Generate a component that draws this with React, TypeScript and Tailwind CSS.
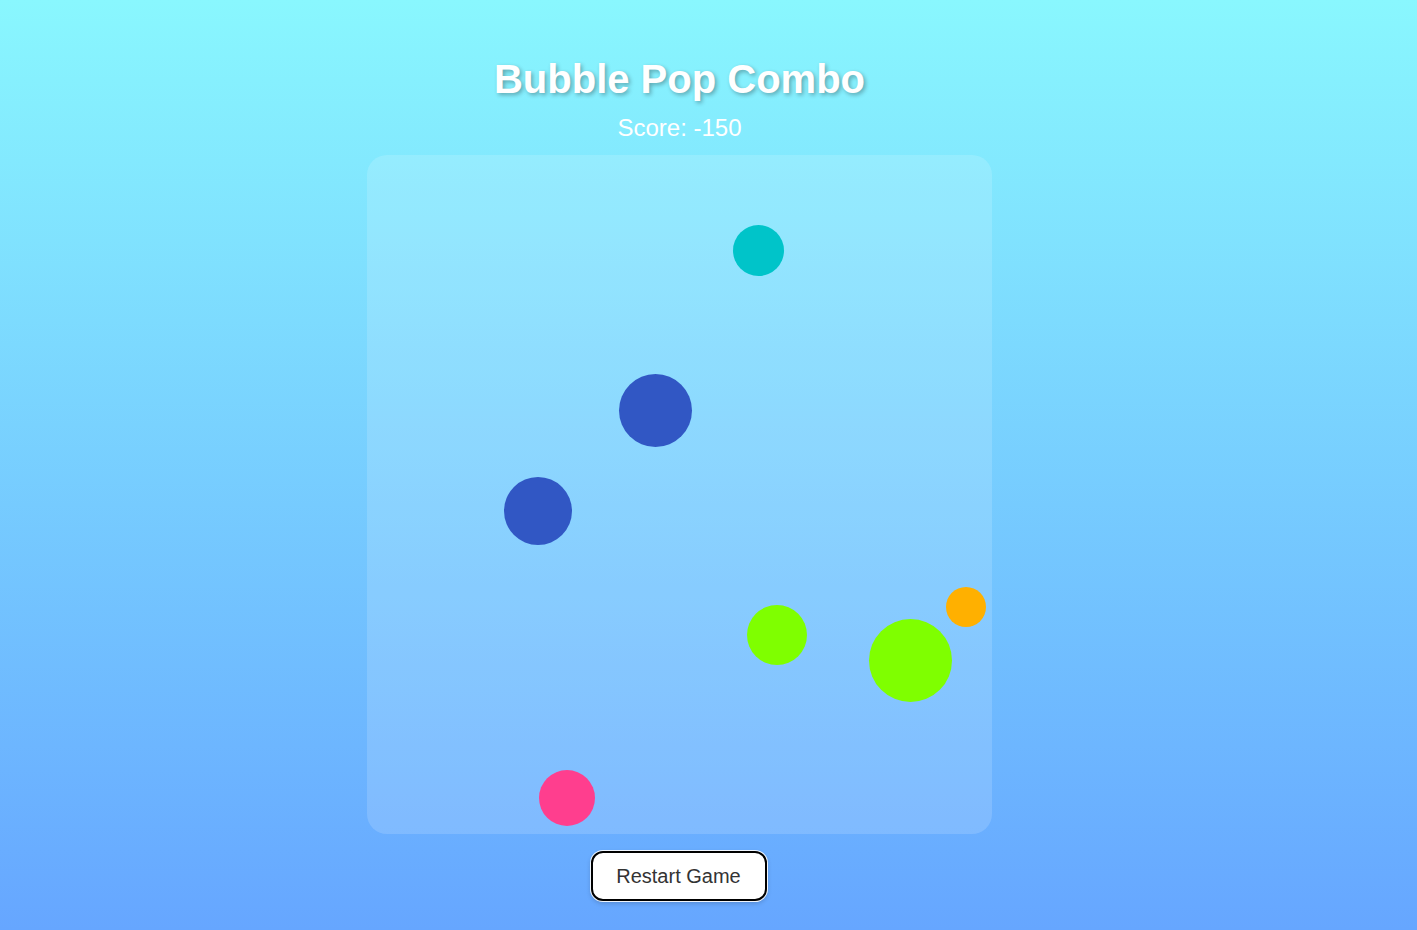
// Bubble Pop Combo - game screen
const bubbles = [
  { id: 1, x: 366, y: 70, size: 51, color: 'bg-[#00c4c9]' },
  { id: 2, x: 252, y: 219, size: 73, color: 'bg-[#3157c4]' },
  { id: 3, x: 137, y: 322, size: 68, color: 'bg-[#3157c4]' },
  { id: 4, x: 579, y: 432, size: 40, color: 'bg-[#ffb000]' },
  { id: 5, x: 380, y: 450, size: 60, color: 'bg-[#7fff00]' },
  { id: 6, x: 502, y: 464, size: 83, color: 'bg-[#7fff00]' },
  { id: 7, x: 172, y: 615, size: 56, color: 'bg-[#ff3e8e]' },
];

export default function App() {
  return (
    <div className="h-screen w-full overflow-hidden bg-linear-to-b/srgb from-[#89f7fe] to-[#66a6ff] font-['Liberation_Sans',Arial,sans-serif]">
      <div className="flex flex-col items-center pr-[58px]">
        <h1 className="mt-[56px] text-[40px] leading-[46px] font-bold text-white [text-shadow:2px_2px_4px_rgba(0,0,0,0.3)]">
          Bubble Pop Combo
        </h1>
        <p className="mt-[12px] text-[24px] leading-[28px] text-white">Score: -150</p>

        {/* Game area */}
        <div className="relative mt-[13px] w-[625px] h-[679px] rounded-[20px] bg-white/15 overflow-hidden">
          {bubbles.map((b) => (
            <div
              key={b.id}
              className={`absolute rounded-full ${b.color}`}
              style={{ left: b.x, top: b.y, width: b.size, height: b.size }}
            />
          ))}
        </div>

        <button className="mt-[17px] mr-[2px] w-[176px] h-[50px] rounded-[12px] border-2 border-black bg-white text-[20px] text-[#333] shadow-[0_0_0_1px_rgba(255,255,255,0.9),0_2px_5px_rgba(0,0,0,0.2)]">
          Restart Game
        </button>
      </div>
    </div>
  );
}
